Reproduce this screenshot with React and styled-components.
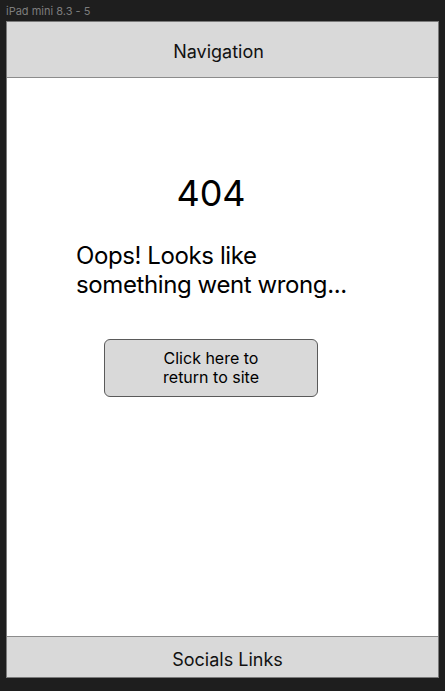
import React from 'react'
import styled, { createGlobalStyle } from 'styled-components'

const GlobalStyle = createGlobalStyle`
  html, body {
    margin: 0;
    padding: 0;
    background: #1e1e1e;
  }
  body {
    font-family: Inter, "Noto Sans", sans-serif;
  }
`

const Canvas = styled.div`
  width: 445px;
  height: 691px;
  background: #1e1e1e;
  overflow: hidden;
`

const FrameLabel = styled.div`
  height: 21px;
  padding-left: 6px;
  font-size: 11px;
  line-height: 22px;
  color: #7d7d7d;
`

const Frame = styled.div`
  margin-left: 6px;
  width: 431px;
  height: 655px;
  border: 1px solid #7a7a7a;
  background: #ffffff;
  display: flex;
  flex-direction: column;
`

// header / footer strip; $shift moves the label off-centre like in the mockup
const Bar = styled.div`
  height: ${p => p.$height}px;
  flex-shrink: 0;
  background: #d9d9d9;
  display: flex;
  align-items: center;
  justify-content: center;
  padding-top: ${p => p.$nudge || 0}px;
  padding-left: ${p => Math.max(p.$shift || 0, 0) * 2}px;
  padding-right: ${p => Math.max(-(p.$shift || 0), 0) * 2}px;
  box-sizing: border-box;
  font-size: 18px;
  color: #111;
  ${p => p.$top ? 'border-bottom: 1px solid #8c8c8c;' : 'border-top: 1px solid #8c8c8c;'}
`

const Main = styled.main`
  flex: 1;
  display: flex;
  flex-direction: column;
  align-items: center;
  padding: 93px 23px 0 0;
`

const ErrorCode = styled.h1`
  margin: 0;
  font-size: 36px;
  font-weight: 400;
  color: #000;
`

const Message = styled.p`
  margin: 26px 0 0;
  width: 270px;
  white-space: nowrap;
  font-size: 24px;
  line-height: 29px;
  letter-spacing: -0.4px;
  color: #000;
`

const ReturnButton = styled.button`
  margin-top: 40px;
  width: 214px;
  height: 58px;
  border: 1px solid #5a5a5a;
  border-radius: 6px;
  background: #d9d9d9;
  font-family: inherit;
  font-size: 16px;
  line-height: 19px;
  color: #000;
  cursor: pointer;
`

export default function App() {
  return (
    <Canvas>
      <GlobalStyle />
      <FrameLabel>iPad mini 8.3 - 5</FrameLabel>
      <Frame>
        <Bar $top $height={56} $nudge={4} $shift={-4}>Navigation</Bar>
        <Main>
          <ErrorCode>404</ErrorCode>
          <Message>Oops! Looks like<br />something went wrong...</Message>
          <ReturnButton>Click here to<br />return to site</ReturnButton>
        </Main>
        <Bar $height={41} $nudge={4} $shift={5}>Socials Links</Bar>
      </Frame>
    </Canvas>
  )
}
